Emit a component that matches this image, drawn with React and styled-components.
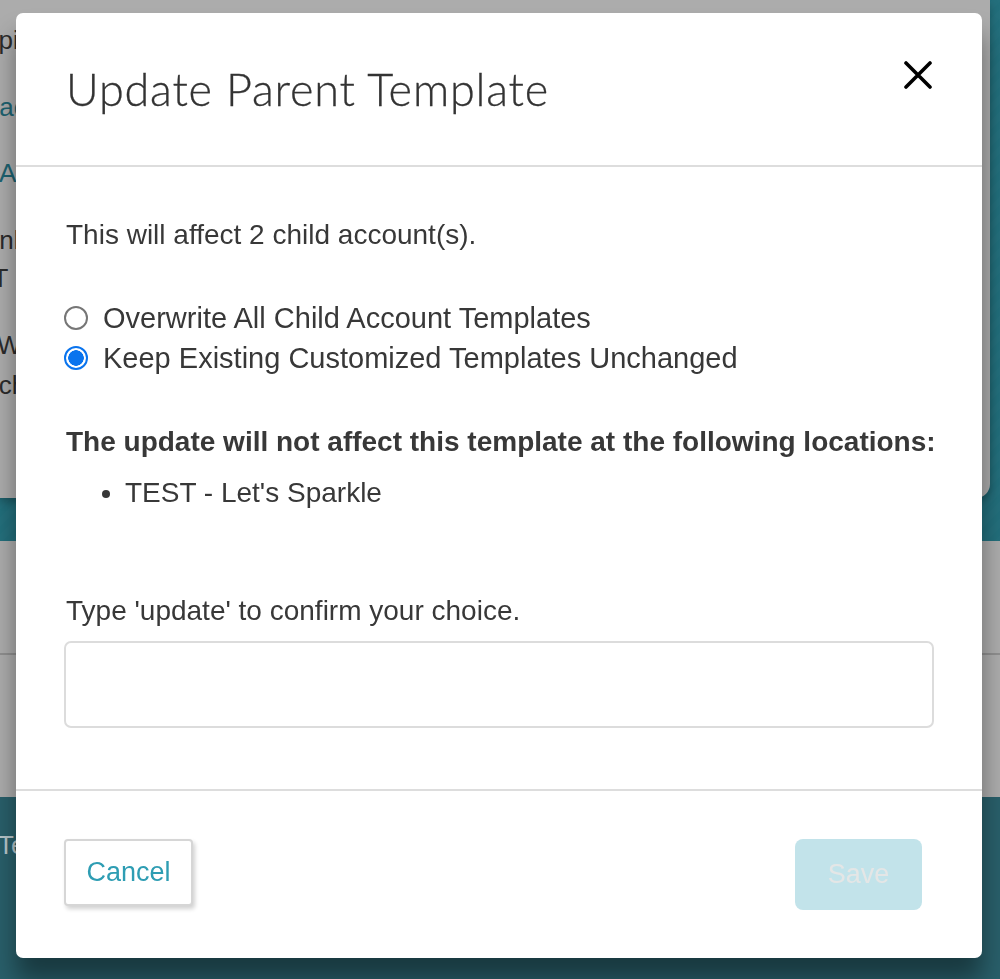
import React from 'react';
import styled, { createGlobalStyle } from 'styled-components';

const GlobalStyle = createGlobalStyle`
  html, body {
    margin: 0;
    padding: 0;
    height: 100%;
    overflow: hidden;
  }
  body {
    font-family: "Liberation Sans", Arial, sans-serif;
  }
`;

const Page = styled.div`
  width: 1000px;
  height: 979px;
  display: flex;
  flex-direction: column;
  overflow: hidden;
`;

const TopArea = styled.div`
  height: 541px;
  background: repeating-linear-gradient(135deg, #226e7b 0 6px, #246f7c 6px 12px);
  display: flex;
  align-items: flex-start;
`;

const Card = styled.div`
  width: 990px;
  height: 498px;
  background: #acacac;
  border-bottom-right-radius: 14px;
  box-shadow: 0 4px 8px rgba(0, 0, 0, 0.25);
  display: flex;
  flex-direction: column;
  padding-top: 22px;
  box-sizing: border-box;
`;

const Peek = styled.div`
  width: 120px;
  height: 36px;
  margin-top: ${(p) => p.$mt || 0}px;
  overflow: hidden;
  white-space: nowrap;
  font-size: 26px;
  line-height: 36px;
  color: ${(p) => p.$color || '#2b2b2b'};
`;

const Word = styled.span`
  display: inline-block;
  margin-left: ${(p) => p.$shift || 0}px;
`;

const MiddleArea = styled.div`
  height: 256px;
  background: #acacac;
  display: flex;
  flex-direction: column;
`;

const Rule = styled.div`
  height: 2px;
  margin-top: 112px;
  background: #8f8f8f;
`;

const BottomArea = styled.div`
  flex: 1;
  background: #295f6a;
  padding-top: 30px;
`;

const Overlay = styled.div`
  position: fixed;
  inset: 0;
  display: flex;
  align-items: flex-start;
  padding: 13px 0 0 16px;
`;

const Modal = styled.div`
  width: 966px;
  height: 945px;
  background: #fff;
  border-radius: 7px;
  box-shadow: 0 22px 24px rgba(0, 0, 0, 0.4);
  display: flex;
  flex-direction: column;
  color: #383838;
`;

const Header = styled.div`
  height: 152px;
  flex-shrink: 0;
  border-bottom: 2px solid #dddddd;
  display: flex;
  align-items: center;
  justify-content: space-between;
  padding: 0 50px 0 50px;
`;

const Title = styled.h2`
  margin: 0;
  font-family: Lato, "Open Sans", sans-serif;
  font-weight: 300;
  font-size: 45px;
  letter-spacing: 0.8px;
  color: #333;
  -webkit-text-stroke: 0.3px #333;
`;

const CloseButton = styled.button`
  border: 0;
  background: none;
  padding: 0;
  width: 28px;
  height: 28px;
  margin-top: -28px;
  cursor: pointer;
  display: flex;
`;

const Body = styled.div`
  flex: 1;
  padding: 51px 48px 0 48px;
  display: flex;
  flex-direction: column;
`;

const Text = styled.p`
  margin: ${(p) => p.$mt || 0}px 0 0 2px;
  font-size: 28px;
  line-height: 34px;
  font-weight: ${(p) => (p.$bold ? 700 : 400)};
  white-space: nowrap;
`;

const RadioGroup = styled.div`
  margin-top: 46px;
  display: flex;
  flex-direction: column;
`;

const RadioRow = styled.label`
  display: flex;
  align-items: center;
  height: 40px;
  font-size: 29px;
  gap: 15px;
`;

const RadioDot = styled.span`
  width: 24px;
  height: 24px;
  box-sizing: border-box;
  border-radius: 50%;
  border: 2px solid ${(p) => (p.$on ? '#0a74ee' : '#767676')};
  background: ${(p) => (p.$on ? 'radial-gradient(circle, #0a74ee 0 7.5px, #fff 8px)' : '#fff')};
  flex-shrink: 0;
`;

const List = styled.ul`
  margin: 17px 0 0;
  padding-left: 61px;
  font-size: 28px;
  line-height: 34px;
`;

const TextInput = styled.input`
  margin-top: 13px;
  height: 87px;
  box-sizing: border-box;
  width: 870px;
  border: 2px solid #dcdcdc;
  border-radius: 7px;
  font-size: 24px;
  padding: 0 16px;
  font-family: inherit;
`;

const Footer = styled.div`
  flex-shrink: 0;
  border-top: 2px solid #dddddd;
  padding: 48px 60px 0 48px;
  height: 169px;
  box-sizing: border-box;
  display: flex;
  justify-content: space-between;
  align-items: flex-start;
`;

const CancelButton = styled.button`
  width: 129px;
  height: 67px;
  background: #fff;
  border: 2px solid #d6d6d6;
  border-radius: 4px;
  box-shadow: 2px 3px 4px rgba(0, 0, 0, 0.18);
  color: #2e9db3;
  font-family: inherit;
  font-size: 27px;
  cursor: pointer;
`;

const SaveButton = styled.button`
  width: 127px;
  height: 71px;
  border: 0;
  border-radius: 8px;
  background: #c2e3ea;
  color: #e4e6e6;
  font-family: inherit;
  font-size: 27px;
`;

function CloseIcon() {
  return (
    <svg width="28" height="28" viewBox="0 0 28 28">
      <path d="M2 2 L26 26 M26 2 L2 26" stroke="#000" strokeWidth="3.6" strokeLinecap="round" />
    </svg>
  );
}

export default function App() {
  return (
    <>
      <GlobalStyle />
      <Page>
        <TopArea>
          <Card>
            <Peek><Word $shift={-29}>Topic</Word></Peek>
            <Peek $mt={31} $color="#1d6270"><Word $shift={-18}>Package</Word></Peek>
            <Peek $mt={30} $color="#1d6270"><Word $shift={-1}>Account</Word></Peek>
            <Peek $mt={31}><Word $shift={-21}>Link</Word></Peek>
            <Peek $mt={2}><Word $shift={-58}>TEST</Word></Peek>
            <Peek $mt={31}><Word $shift={-3}>What</Word></Peek>
            <Peek $mt={4}><Word $shift={-33}>Each</Word></Peek>
          </Card>
        </TopArea>
        <MiddleArea>
          <Rule />
        </MiddleArea>
        <BottomArea>
          <Peek $color="#b7c6ca"><Word $shift={-2}>Templates</Word></Peek>
        </BottomArea>
      </Page>
      <Overlay>
        <Modal>
          <Header>
            <Title>Update Parent Template</Title>
            <CloseButton aria-label="Close">
              <CloseIcon />
            </CloseButton>
          </Header>
          <Body>
            <Text>This will affect 2 child account(s).</Text>
            <RadioGroup>
              <RadioRow>
                <RadioDot />
                Overwrite All Child Account Templates
              </RadioRow>
              <RadioRow>
                <RadioDot $on />
                Keep Existing Customized Templates Unchanged
              </RadioRow>
            </RadioGroup>
            <Text $bold $mt={47}>The update will not affect this template at the following locations:</Text>
            <List>
              <li>TEST - Let's Sparkle</li>
            </List>
            <Text $mt={84}>Type 'update' to confirm your choice.</Text>
            <TextInput />
          </Body>
          <Footer>
            <CancelButton>Cancel</CancelButton>
            <SaveButton disabled>Save</SaveButton>
          </Footer>
        </Modal>
      </Overlay>
    </>
  );
}
